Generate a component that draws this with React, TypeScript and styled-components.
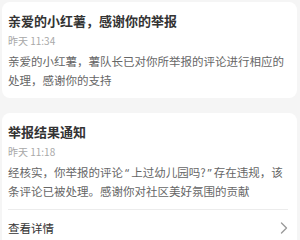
import React from "react";
import styled, { createGlobalStyle } from "styled-components";
import { ChevronRight } from "lucide-react";

const Global = createGlobalStyle`
  html, body { margin: 0; padding: 0; background: #f5f5f5; }
  body { font-family: "Noto Sans CJK SC", "Noto Sans", sans-serif; }
`;

const Page = styled.div`
  display: flex;
  flex-direction: column;
  gap: 15px;
  padding: 2px 3px 0 2px;
  width: 300px;
  height: 240px;
  box-sizing: border-box;
  overflow: hidden;
`;

const Card = styled.div`
  background: #ffffff;
  border-radius: 8px;
  padding: 9px 9px 8px 6px;
  display: flex;
  flex-direction: column;
  flex-shrink: 0;
`;

const Title = styled.div`
  font-size: 13px;
  font-weight: 700;
  line-height: 20px;
  color: #333333;
`;

const Time = styled.div`
  margin-top: 3px;
  font-size: 10px;
  line-height: 14px;
  color: #a8a8a8;
`;

const Body = styled.div`
  margin-top: 4px;
  font-size: 11.5px;
  line-height: 19px;
  color: #666666;
`;

const Quote = styled.span`
  font-family: "Noto Sans", sans-serif;
  padding: 0 2px;
`;

const Divider = styled.div`
  margin-top: 8px;
  height: 1px;
  background: #ececec;
`;

const LinkRow = styled.div`
  height: 36px;
  display: flex;
  align-items: center;
  justify-content: space-between;
  font-size: 11.5px;
  color: #333333;
  svg { margin-right: -6px; color: #9a9a9a; }
`;

export default function App() {
  return (
    <>
      <Global />
      <Page>
        <Card>
          <Title>亲爱的小红薯，感谢你的举报</Title>
          <Time>昨天 11:34</Time>
          <Body>亲爱的小红薯，薯队长已对你所举报的评论进行相应的处理，感谢你的支持</Body>
        </Card>
        <Card>
          <Title>举报结果通知</Title>
          <Time>昨天 11:18</Time>
          <Body>
            经核实，你举报的评论<Quote>“</Quote>上过幼儿园吗?<Quote>”</Quote>存在违规，该条评论已被处理。感谢你对社区美好氛围的贡献
          </Body>
          <Divider />
          <LinkRow>
            <span>查看详情</span>
            <ChevronRight size={20} strokeWidth={1.6} />
          </LinkRow>
        </Card>
      </Page>
    </>
  );
}
